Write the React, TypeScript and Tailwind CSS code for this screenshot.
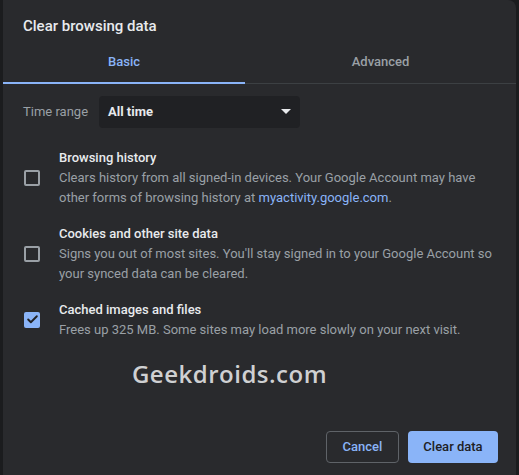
import { Check } from "lucide-react";

type Item = {
  title: string;
  desc: React.ReactNode;
  checked: boolean;
};

const items: Item[] = [
  {
    title: "Browsing history",
    desc: (
      <>
        Clears history from all signed-in devices. Your Google Account may have
        other forms of browsing history at{" "}
        <span className="text-[#8ab4f8]">myactivity.google.com</span>.
      </>
    ),
    checked: false,
  },
  {
    title: "Cookies and other site data",
    desc: "Signs you out of most sites. You'll stay signed in to your Google Account so your synced data can be cleared.",
    checked: false,
  },
  {
    title: "Cached images and files",
    desc: "Frees up 325 MB. Some sites may load more slowly on your next visit.",
    checked: true,
  },
];

function CheckRow({ item }: { item: Item }) {
  return (
    <div className="flex items-center">
      <div className="w-[56px] shrink-0 pl-[21px]">
        {item.checked ? (
          <div className="w-[16px] h-[16px] rounded-[2px] bg-[#8ab4f8] flex items-center justify-center">
            <Check size={13} strokeWidth={3.5} className="text-[#202124]" />
          </div>
        ) : (
          <div className="w-[16px] h-[16px] rounded-[2px] border-2 border-[#9aa0a6]" />
        )}
      </div>
      <div className="flex-1 pr-5">
        <p className="text-[13px] leading-[20px] font-medium text-[#e8eaed]">
          {item.title}
        </p>
        <p className="text-[13px] leading-[20px] text-[#9aa0a6]">{item.desc}</p>
      </div>
    </div>
  );
}

export default function App() {
  return (
    <div
      className="w-[519px] h-[475px] bg-[#1b1c1e] px-[3px] overflow-hidden"
      style={{ fontFamily: "Roboto, 'Liberation Sans', sans-serif" }}
    >
      <div className="h-full bg-[#292a2d] rounded-tr-[8px] flex flex-col">
        {/* TITLE */}
        <h1 className="pl-5 pt-[15px] text-[15px] leading-[22px] text-[#e8eaed] font-medium">
          Clear browsing data
        </h1>

        {/* TABS */}
        <div className="flex mt-[15px] border-b border-[#3c4043]">
          <div className="w-[242px] text-center">
            <div className="text-[13px] font-medium text-[#8ab4f8] pb-[10px]">
              Basic
            </div>
            <div className="h-[2px] bg-[#8ab4f8] -mb-px" />
          </div>
          <div className="flex-1 text-center">
            <div className="text-[13px] font-medium text-[#9aa0a6] pb-[10px]">
              Advanced
            </div>
          </div>
        </div>

        {/* TIME RANGE */}
        <div className="flex items-center pl-5 mt-[12px]">
          <span className="text-[13px] text-[#9aa0a6] w-[76px]">Time range</span>
          <div className="w-[201px] h-[32px] bg-[#202124] rounded-[4px] flex items-center justify-between pl-[9px] pr-[9px]">
            <span className="text-[13px] font-bold text-[#e8eaed]">All time</span>
            <svg width="10" height="5" viewBox="0 0 10 5">
              <path d="M0 0 L10 0 L5 5 Z" fill="#e8eaed" />
            </svg>
          </div>
        </div>

        {/* CHECKBOXES */}
        <div className="flex flex-col gap-[16px] mt-[20px]">
          {items.map((item) => (
            <CheckRow key={item.title} item={item} />
          ))}
        </div>

        {/* WATERMARK */}
        <div className="flex justify-center mt-[16px] pr-[60px]">
          <span
            className="text-[24px] font-semibold text-[#cfd0d2] tracking-[0.5px]"
            style={{ fontFamily: "'Open Sans', Lato, sans-serif" }}
          >
            Geekdroids.com
          </span>
        </div>

        {/* BUTTONS */}
        <div className="mt-auto flex justify-end gap-[9px] pr-[18px] pb-[12px]">
          <button className="h-[32px] w-[73px] rounded-[4px] border border-[#5f6368] text-[13px] font-medium text-[#8ab4f8]">
            Cancel
          </button>
          <button className="h-[32px] w-[90px] rounded-[4px] bg-[#8ab4f8] text-[13px] font-medium text-[#202124]">
            Clear data
          </button>
        </div>
      </div>
    </div>
  );
}
